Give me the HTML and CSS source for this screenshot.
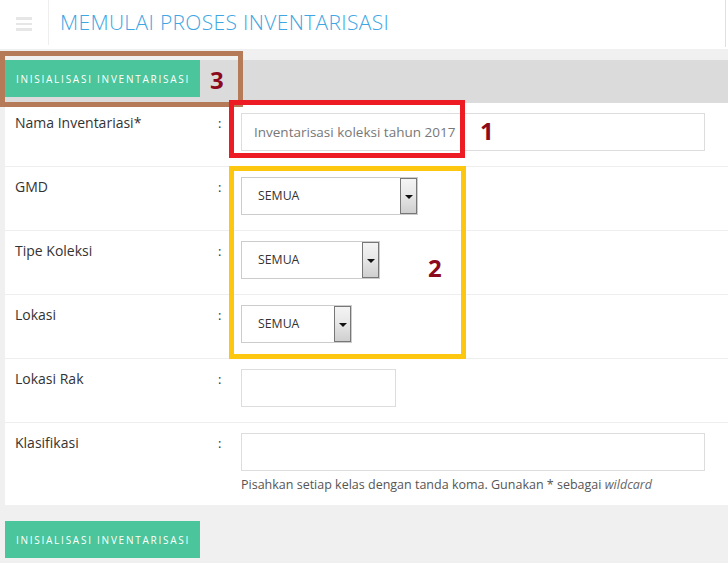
FILE: index.html
```html
<!DOCTYPE html>
<html lang="id">
<head>
<meta charset="utf-8">
<title>Memulai Proses Inventarisasi</title>
<link rel="stylesheet" href="styles.css">
</head>
<body>
<header class="topbar">
  <div class="menu">
    <span class="bar"></span><span class="bar"></span><span class="bar"></span>
  </div>
  <h1 class="title">MEMULAI PROSES INVENTARISASI</h1>
  <div class="edge"></div>
</header>

<main class="panel">
  <div class="toolbar">
    <button class="btn">INISIALISASI INVENTARISASI</button>
  </div>
  <form class="form">
    <div class="row">
      <label class="label">Nama Inventariasi*</label>
      <span class="colon">:</span>
      <div class="field"><input class="input wide" type="text" value="Inventarisasi koleksi tahun 2017"></div>
    </div>
    <div class="row">
      <label class="label">GMD</label>
      <span class="colon">:</span>
      <div class="field"><div class="select s1"><span class="sel-text">SEMUA</span><span class="arrow"></span></div></div>
    </div>
    <div class="row">
      <label class="label">Tipe Koleksi</label>
      <span class="colon">:</span>
      <div class="field"><div class="select s2"><span class="sel-text">SEMUA</span><span class="arrow"></span></div></div>
    </div>
    <div class="row">
      <label class="label">Lokasi</label>
      <span class="colon">:</span>
      <div class="field"><div class="select s3"><span class="sel-text">SEMUA</span><span class="arrow"></span></div></div>
    </div>
    <div class="row">
      <label class="label">Lokasi Rak</label>
      <span class="colon">:</span>
      <div class="field"><input class="input small" type="text"></div>
    </div>
    <div class="row last">
      <label class="label">Klasifikasi</label>
      <span class="colon">:</span>
      <div class="field">
        <input class="input wide" type="text">
        <p class="hint">Pisahkan setiap kelas dengan tanda koma. Gunakan * sebagai <em>wildcard</em></p>
      </div>
    </div>
  </form>
</main>
<div class="footer">
  <button class="btn">INISIALISASI INVENTARISASI</button>
</div>

<div class="mark mark-brown"></div>
<div class="mark mark-red"></div>
<div class="mark mark-yellow"></div>
<span class="num n3">3</span>
<span class="num n1">1</span>
<span class="num n2">2</span>
</body>
</html>
```

FILE: styles.css
```css
* { box-sizing: border-box; }
html, body { margin: 0; padding: 0; }
body {
  background: #f0f0f0;
  font-family: "Open Sans", "Liberation Sans", sans-serif;
  color: #333;
  width: 728px;
  height: 563px;
  overflow: hidden;
  position: relative;
}
.topbar {
  height: 49px;
  background: #fff;
  display: flex;
  align-items: flex-start;
}
.menu {
  width: 49px;
  height: 45px;
  border-right: 1px solid #eee;
  display: flex;
  flex-direction: column;
  padding: 17px 0 0 16px;
  gap: 3px;
}
.bar {
  display: block;
  width: 16px;
  height: 2.5px;
  background: #e6e6e6;
}
.title {
  margin: 0;
  padding: 8px 0 0 11px;
  font-weight: 300;
  font-size: 21px;
  line-height: 28px;
  letter-spacing: 0.35px;
  color: #3fa6e4;
  flex: 1;
}
.edge {
  width: 1px;
  height: 47px;
  background: #e0e0e0;
  margin-right: 2px;
}
.panel {
  margin: 11px 0 0 5px;
  background: #fff;
}
.toolbar {
  height: 43px;
  background: #dbdbdb;
}
.btn {
  display: block;
  height: 37px;
  width: 195px;
  border: 0;
  margin: 0;
  padding: 0 0 0 1px;
  background: #4bc59b;
  color: #fff;
  font-family: "Open Sans", "Liberation Sans", sans-serif;
  font-size: 10px;
  letter-spacing: 1.75px;
  text-align: center;
}
.form { display: block; }
.row {
  display: grid;
  grid-template-columns: 203px 23px 1fr;
  height: 64px;
  border-bottom: 1px solid #eee;
  padding: 10px 0 0 10px;
}
.row.last {
  height: 82px;
  border-bottom: 0;
}
.label {
  font-size: 14px;
  line-height: 20px;
  color: #333;
}
.colon {
  font-size: 13px;
  line-height: 20px;
  color: #333;
}
.field { display: flex; flex-direction: column; align-items: flex-start; }
.input {
  height: 38px;
  border: 1px solid #ddd;
  background: #fff;
  font-family: "Open Sans", "Liberation Sans", sans-serif;
  font-size: 13.5px;
  color: #777;
  padding: 0 0 0 12px;
  margin: 0;
  outline: none;
}
.input.wide { width: 464px; }
.input.small { width: 155px; }
.select {
  height: 38px;
  border: 1px solid #ccc;
  display: flex;
  align-items: stretch;
}
.s1 { width: 177px; }
.s2 { width: 139px; }
.s3 { width: 111px; }
.sel-text {
  flex: 1;
  font-size: 12.3px;
  line-height: 36px;
  padding-left: 16px;
  color: #333;
}
.arrow {
  width: 17px;
  border: 1px solid #777;
  background: linear-gradient(#f4f4f4 0%, #e8e8e8 45%, #cfcfcf 100%);
  display: flex;
  align-items: center;
  justify-content: center;
}
.arrow::after {
  content: "";
  width: 0;
  height: 0;
  border-left: 4px solid transparent;
  border-right: 4px solid transparent;
  border-top: 4px solid #111;
  margin-top: 2px;
}
.hint {
  margin: 6px 0 0;
  font-size: 12.5px;
  line-height: 16px;
  color: #555;
}
.hint em { font-style: italic; color: #666; }
.footer {
  padding: 16px 0 0 5px;
}

/* annotation overlays */
.mark { position: absolute; border-style: solid; border-width: 5px; }
.mark-brown { left: 0; top: 51px; width: 243px; height: 56px; border-color: #b57a58; }
.mark-red { left: 229px; top: 100px; width: 236px; height: 58px; border-color: #ed1c24; }
.mark-yellow { left: 229px; top: 166px; width: 237px; height: 193px; border-color: #fdc70f; }
.num {
  position: absolute;
  font-family: "Open Sans", "Liberation Sans", sans-serif;
  font-weight: 700;
  font-size: 24px;
  line-height: 24px;
  color: #8b0a1c;
}
.n3 { left: 210px; top: 68px; }
.n1 { left: 480px; top: 119px; }
.n2 { left: 428px; top: 256px; }
```
